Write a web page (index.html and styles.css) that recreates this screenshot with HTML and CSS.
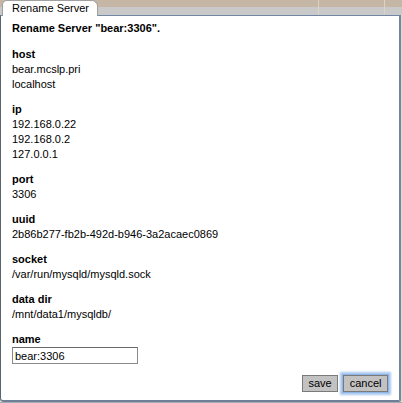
FILE: index.html
```html
<!DOCTYPE html>
<html>
<head>
<meta charset="utf-8">
<link rel="stylesheet" href="styles.css">
</head>
<body>
<div class="screen">
  <div class="tabbar">
    <div class="tab">Rename Server</div>
    <div class="tabfill"></div>
  </div>
  <div class="dialog">
    <div class="title">Rename Server "bear:3306".</div>
    <div class="field">
      <div class="label">host</div>
      <div class="value">bear.mcslp.pri</div>
      <div class="value">localhost</div>
    </div>
    <div class="field">
      <div class="label">ip</div>
      <div class="value">192.168.0.22</div>
      <div class="value">192.168.0.2</div>
      <div class="value">127.0.0.1</div>
    </div>
    <div class="field">
      <div class="label">port</div>
      <div class="value">3306</div>
    </div>
    <div class="field">
      <div class="label">uuid</div>
      <div class="value">2b86b277-fb2b-492d-b946-3a2acaec0869</div>
    </div>
    <div class="field">
      <div class="label">socket</div>
      <div class="value">/var/run/mysqld/mysqld.sock</div>
    </div>
    <div class="field">
      <div class="label">data dir</div>
      <div class="value">/mnt/data1/mysqldb/</div>
    </div>
    <div class="field">
      <div class="label">name</div>
      <input class="name-input" type="text" value="bear:3306">
    </div>
    <div class="actions">
      <button class="btn">save</button>
      <button class="btn focused">cancel</button>
    </div>
  </div>
</div>
</body>
</html>
```
FILE: styles.css
```css
html, body {
  margin: 0;
  padding: 0;
}
body {
  width: 402px;
  height: 403px;
  overflow: hidden;
  background: #a3abb6;
  font-family: "Liberation Sans", Arial, sans-serif;
  font-size: 11px;
  color: #000;
}
.screen {
  display: flex;
  flex-direction: column;
  width: 402px;
  height: 402px;
  background: #dedcc6;
}
.tabbar {
  display: flex;
  height: 15px;
  background:
    linear-gradient(to right, transparent 318px, #dcd2c6 318px, #dcd2c6 319px, transparent 319px, transparent 384px, #dcd2c6 384px, #dcd2c6 385px, transparent 385px),
    linear-gradient(to bottom, #c6b6a6 0, #c6b6a6 7px, #c9c9c9 7px, #c9c9c9 15px);
}
.tab {
  position: relative;
  z-index: 2;
  margin-left: 2px;
  width: 85px;
  height: 15px;
  padding-left: 9px;
  line-height: 15px;
  background: #fff;
  border: 1px solid #a0a0a0;
  border-bottom: none;
  border-radius: 5px 6px 0 0;
  margin-bottom: -1px;
  box-sizing: content-box;
}
.tabfill {
  flex: 1;
}
.dialog {
  flex: 1;
  width: 401px;
  background: #fff;
  border-top: 1px solid #7186a5;
  border-left: 1px solid #5c6470;
  border-right: 2px solid #7186a5;
  border-bottom: 2px solid #6f7f96;
  border-radius: 0 0 2px 4px;
  padding: 5px 0 0 11px;
  box-sizing: border-box;
  display: flex;
  flex-direction: column;
  gap: 10px;
}
.title {
  font-weight: bold;
  line-height: 15px;
  margin-bottom: 1px;
}
.field {
  display: flex;
  flex-direction: column;
  line-height: 15px;
}
.label {
  font-weight: bold;
}
.name-input {
  width: 126px;
  height: 17px;
  box-sizing: border-box;
  margin: 0;
  padding: 0 2px;
  border: 1px solid #8a8a8a;
  border-top-color: #6a6a6a;
  font-family: "Liberation Sans", Arial, sans-serif;
  font-size: 11px;
  color: #000;
  outline: none;
}
.actions {
  display: flex;
  justify-content: flex-end;
  gap: 5px;
  margin-top: 1px;
  padding-right: 11px;
}
.btn {
  height: 17px;
  padding: 0 5.5px;
  background: #c2c2c2;
  border: 1px solid #7a7a7a;
  font-family: "Liberation Sans", Arial, sans-serif;
  font-size: 11px;
  color: #000;
  line-height: 15px;
  border-radius: 0;
}
.btn.focused {
  box-shadow: 0 0 0 1px #8fb6e6, 0 0 2px 3px #a9c8ee;
}
```
